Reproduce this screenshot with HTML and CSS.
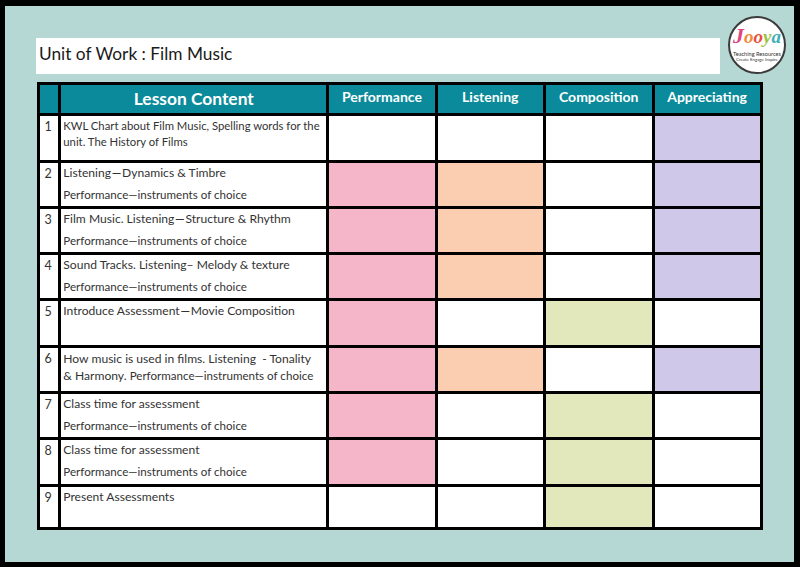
FILE: index.html
```html
<!DOCTYPE html>
<html lang="en">
<head>
<meta charset="utf-8">
<title>Unit of Work : Film Music</title>
<link rel="stylesheet" href="styles.css">
</head>
<body>
<main class="panel">
  <h1 class="title">Unit of Work : Film Music</h1>
  <div class="logo">
    <div class="logo-name"><span class="c1">J</span><span class="c2">o</span><span class="c3">o</span><span class="c4">y</span><span class="c5">a</span></div>
    <div class="logo-sub">Teaching Resources</div>
    <div class="logo-tag">Create Engage Inspire</div>
  </div>
  <div class="grid">
    <div class="head"></div>
    <div class="head head-main">Lesson Content</div>
    <div class="head">Performance</div>
    <div class="head">Listening</div>
    <div class="head">Composition</div>
    <div class="head">Appreciating</div>

    <div class="num">1</div>
    <div class="lesson"><p class="wrap narrow">KWL Chart about Film Music, Spelling words for the unit. The History of Films</p></div>
    <div></div><div></div><div></div><div class="purple"></div>

    <div class="num">2</div>
    <div class="lesson"><p class="main">Listening&#8202;—&#8202;Dynamics &amp; Timbre</p><p class="sub">Performance—instruments of choice</p></div>
    <div class="pink"></div><div class="peach"></div><div></div><div class="purple"></div>

    <div class="num">3</div>
    <div class="lesson"><p class="main">Film Music. Listening&#8202;—&#8202;Structure &amp; Rhythm</p><p class="sub">Performance—instruments of choice</p></div>
    <div class="pink"></div><div class="peach"></div><div></div><div class="purple"></div>

    <div class="num">4</div>
    <div class="lesson"><p class="main">Sound Tracks. Listening– Melody &amp; texture</p><p class="sub">Performance—instruments of choice</p></div>
    <div class="pink"></div><div class="peach"></div><div></div><div class="purple"></div>

    <div class="num">5</div>
    <div class="lesson"><p class="main">Introduce Assessment&#8202;—&#8202;Movie Composition</p></div>
    <div class="pink"></div><div></div><div class="green"></div><div></div>

    <div class="num">6</div>
    <div class="lesson"><p class="wrap tall">How music is used in films. Listening &nbsp;- Tonality<br>&amp; Harmony. <span class="small">Performance—instruments of choice</span></p></div>
    <div class="pink"></div><div class="peach"></div><div></div><div class="purple"></div>

    <div class="num">7</div>
    <div class="lesson"><p class="main">Class time for assessment</p><p class="sub">Performance—instruments of choice</p></div>
    <div class="pink"></div><div></div><div class="green"></div><div></div>

    <div class="num">8</div>
    <div class="lesson"><p class="main">Class time for assessment</p><p class="sub">Performance—instruments of choice</p></div>
    <div class="pink"></div><div></div><div class="green"></div><div></div>

    <div class="num">9</div>
    <div class="lesson"><p class="main">Present Assessments</p></div>
    <div></div><div></div><div class="green"></div><div></div>
  </div>
</main>
</body>
</html>
```

FILE: styles.css
```css
* { box-sizing: border-box; }
html, body { margin: 0; padding: 0; }
body {
  width: 800px;
  height: 567px;
  background: #000;
  padding: 6px 6px 5px 5px;
  font-family: Lato, "Open Sans", sans-serif;
  overflow: hidden;
}
.panel {
  position: relative;
  height: 556px;
  background: #b5d8d5;
  padding: 32px 0 0 31px;
}
.title {
  width: 684px;
  height: 36px;
  margin: 0 0 8.3px 0;
  padding: 0 0 0 3px;
  background: #fff;
  color: #1a1a1a;
  font-size: 17.3px;
  font-weight: 400;
  line-height: 31px;
}
.logo {
  position: absolute;
  left: 723px;
  top: 10px;
  width: 58px;
  height: 58px;
  border: 2.5px solid #3c3c3c;
  border-radius: 50%;
  background: #fff;
  text-align: center;
  color: #333;
}
.logo-name {
  font-family: "Liberation Serif", serif;
  font-style: italic;
  font-weight: 700;
  font-size: 19px;
  line-height: 20px;
  margin-top: 8px;
}
.c1 { color: #e0457f; font-size: 22px; }
.c2 { color: #f08a3c; }
.c3 { color: #e8503f; }
.c4 { color: #9cc23f; }
.c5 { color: #3fb0b5; }
.logo-sub { font-size: 5.6px; line-height: 7px; margin-top: 3px; white-space: nowrap; }
.logo-tag { font-size: 4.4px; line-height: 6px; white-space: nowrap; }
.grid {
  width: 726px;
  height: 448px;
  margin-left: 0.7px;
  padding: 3px 3px 3px 3.3px;
  background: #000;
  display: grid;
  grid-template-columns: 18.3px 265px 105.3px 105.4px 105.6px 105px;
  grid-template-rows: 28px repeat(8, 43.3px) 40.7px;
  gap: 3px;
}
.grid > div { background: #fff; min-width: 0; }
.grid > .head {
  background: #0a8a9a;
  color: #fff;
  font-size: 14px;
  font-weight: 700;
  text-align: center;
  line-height: 24px;
}
.grid > .head-main { font-size: 17.4px; line-height: 28px; }
.grid > .num {
  color: #333;
  font-size: 12.5px;
  line-height: 18px;
  padding: 2px 2px 0 0;
  text-align: center;
}
.lesson { padding: 2px 2px 0 2px; color: #333; }
.lesson p { margin: 0; font-size: 12.1px; }
.lesson .main { line-height: 15px; }
.lesson .sub { font-size: 11.6px; line-height: 15px; margin-top: 7px; }
.lesson .wrap { line-height: 15.5px; }
.lesson .tall { line-height: 17px; }
.lesson .narrow { font-size: 11.3px; }
.lesson .small { font-size: 11.6px; line-height: 15px; }
.grid > .pink { background: #f4b6c8; }
.grid > .peach { background: #fbceb2; }
.grid > .purple { background: #cfc8e8; }
.grid > .green { background: #e2e8bb; }
```
